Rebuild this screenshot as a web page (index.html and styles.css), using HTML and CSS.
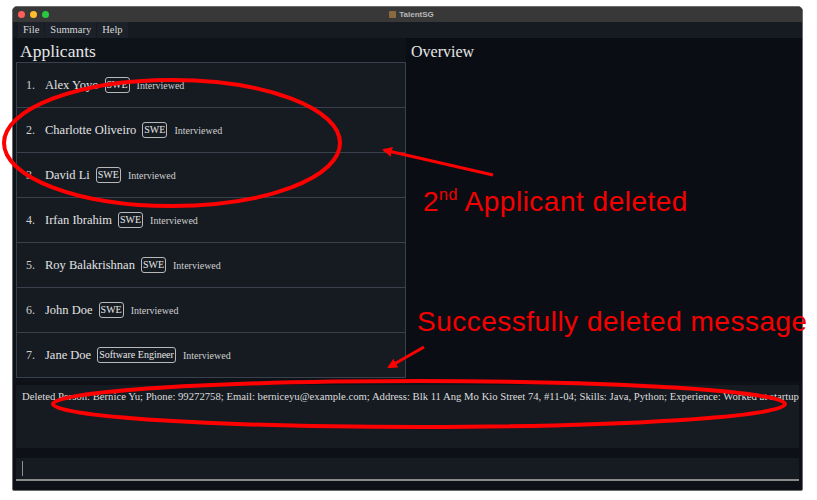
FILE: index.html
```html
<!DOCTYPE html>
<html>
<head>
<meta charset="utf-8">
<link rel="stylesheet" href="styles.css">
</head>
<body>
<div class="window">
  <div class="titlebar">
    <div class="lights">
      <span class="light red"></span>
      <span class="light yellow"></span>
      <span class="light green"></span>
    </div>
    <div class="title"><span class="appicon"></span>TalentSG</div>
  </div>
  <div class="menubar">
    <span class="menu">File</span>
    <span class="menu">Summary</span>
    <span class="menu">Help</span>
  </div>
  <div class="main">
    <div class="left">
      <div class="heading">Applicants</div>
      <div class="list">
        <div class="row"><span class="num">1.</span><span class="name">Alex Yoyo</span><span class="tag">SWE</span><span class="status">Interviewed</span></div>
        <div class="row"><span class="num">2.</span><span class="name">Charlotte Oliveiro</span><span class="tag">SWE</span><span class="status">Interviewed</span></div>
        <div class="row"><span class="num">3.</span><span class="name">David Li</span><span class="tag">SWE</span><span class="status">Interviewed</span></div>
        <div class="row"><span class="num">4.</span><span class="name">Irfan Ibrahim</span><span class="tag">SWE</span><span class="status">Interviewed</span></div>
        <div class="row"><span class="num">5.</span><span class="name">Roy Balakrishnan</span><span class="tag">SWE</span><span class="status">Interviewed</span></div>
        <div class="row"><span class="num">6.</span><span class="name">John Doe</span><span class="tag">SWE</span><span class="status">Interviewed</span></div>
        <div class="row"><span class="num">7.</span><span class="name">Jane Doe</span><span class="tag">Software Engineer</span><span class="status">Interviewed</span></div>
      </div>
    </div>
    <div class="right">
      <div class="heading">Overview</div>
    </div>
  </div>
  <div class="result">Deleted Person: Bernice Yu; Phone: 99272758; Email: berniceyu@example.com; Address: Blk 11 Ang Mo Kio Street 74, #11-04; Skills: Java, Python; Experience: Worked at startup</div>
  <div class="command"><span class="cursor"></span></div>
</div>

<svg class="annot" width="817" height="500" viewBox="0 0 817 500">
  <defs>
    <marker id="ah" markerWidth="10" markerHeight="10" refX="8" refY="5" orient="auto" markerUnits="userSpaceOnUse">
      <path d="M0,0 L10,5 L0,10 z" fill="#f00"/>
    </marker>
  </defs>
  <ellipse cx="172" cy="143" rx="168" ry="63" fill="none" stroke="#f00" stroke-width="4"/>
  <ellipse cx="419" cy="404" rx="366" ry="23" fill="none" stroke="#f00" stroke-width="4"/>
  <line x1="493" y1="175" x2="384" y2="150" stroke="#f00" stroke-width="3" marker-end="url(#ah)"/>
  <line x1="424" y1="347" x2="389" y2="367" stroke="#f00" stroke-width="3" marker-end="url(#ah)"/>
</svg>
<div class="label label1">2<sup>nd</sup> Applicant deleted</div>
<div class="label label2">Successfully deleted message</div>
</body>
</html>
```

FILE: styles.css
```css
* { box-sizing: border-box; }
html, body { margin: 0; padding: 0; }
body {
  background: #ffffff;
  width: 817px;
  height: 500px;
  position: relative;
  padding: 6px 0 0 12px;
  font-family: "Liberation Serif", serif;
}
.window {
  width: 791px;
  height: 485px;
  background: #0d1117;
  border: 1px solid #6b6b6b;
  border-radius: 5px 5px 2px 2px;
  display: flex;
  flex-direction: column;
  overflow: hidden;
}
.titlebar {
  height: 15px;
  background: #383838;
  position: relative;
  display: flex;
  align-items: center;
  justify-content: center;
  flex-shrink: 0;
}
.lights {
  position: absolute;
  left: 5px;
  top: 4px;
  display: flex;
  gap: 5px;
}
.light { width: 7px; height: 7px; border-radius: 50%; display: block; }
.red { background: #ff5f57; }
.yellow { background: #febc2e; }
.green { background: #28c840; }
.title {
  font-family: "Liberation Sans", sans-serif;
  font-size: 8px;
  font-weight: bold;
  color: #b9b9b9;
  display: flex;
  align-items: center;
  gap: 3px;
  margin-left: 8px;
}
.appicon {
  width: 7px; height: 7px;
  background: #8a6a3c;
  border-radius: 1px;
  display: block;
}
.menubar {
  height: 16px;
  background: #161b22;
  display: flex;
  padding-left: 5px;
  gap: 1px;
  flex-shrink: 0;
}
.menu {
  background: #1c2129;
  color: #d8d8d8;
  font-size: 10.5px;
  padding: 0 5px;
  line-height: 16px;
}
.main {
  height: 344px;
  display: flex;
  flex-shrink: 0;
}
.left {
  width: 393px;
  padding-left: 3px;
  background: #0e131a;
}
.right {
  flex: 1;
  background: #0a0e14;
  padding-left: 5px;
}
.heading {
  height: 24px;
  font-size: 17.5px;
  color: #e6e6e6;
  line-height: 27px;
  padding-left: 4px;
}
.right .heading { padding-left: 0; font-size: 16px; }
.list {
  border: 1px solid #3a414c;
  background: #161b22;
}
.row {
  height: 45px;
  display: flex;
  align-items: center;
  padding-left: 9px;
  border-bottom: 1px solid #3a414c;
  color: #dedede;
}
.row:last-child { border-bottom: none; height: 44px; }
.num { font-size: 12px; width: 19px; color: #d0d0d0; }
.name { font-size: 12.5px; color: #e2e2e2; margin-right: 6px; }
.tag {
  font-size: 10px;
  color: #e6e6e6;
  border: 1px solid #b8b8b8;
  border-radius: 3px;
  height: 16px;
  line-height: 14px;
  padding: 0 1px;
  margin-right: 7px;
}
.status { font-size: 10px; color: #cfcfcf; }
.result {
  margin: 3px 3px 0 3px;
  height: 63px;
  background: #161b22;
  color: #dcdcdc;
  font-size: 10.7px;
  padding: 5px 6px;
  white-space: nowrap;
  overflow: hidden;
  flex-shrink: 0;
}
.command {
  margin: 10px 3px 0 3px;
  height: 23px;
  background: #161b22;
  border-bottom: 2px solid #8a8a8a;
  position: relative;
  flex-shrink: 0;
}
.cursor {
  position: absolute;
  left: 6px;
  top: 3px;
  width: 1px;
  height: 15px;
  background: #8f8f8f;
}
.annot {
  position: absolute;
  left: 0;
  top: 0;
  pointer-events: none;
}
.label {
  position: absolute;
  font-family: "Liberation Sans", Arial, sans-serif;
  font-size: 28px;
  letter-spacing: 0.5px;
  line-height: 28px;
  color: #f40000;
  white-space: nowrap;
}
.label sup { font-size: 16px; line-height: 0; vertical-align: 11px; }
.label1 { left: 423px; top: 188px; }
.label2 { left: 417px; top: 308px; }
```
